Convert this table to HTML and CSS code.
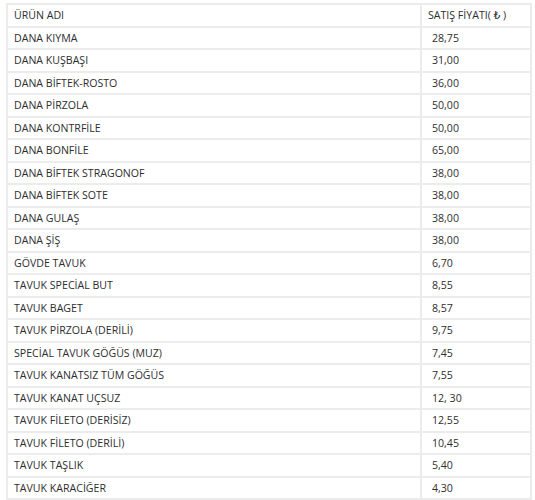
FILE: index.html
```html
<!DOCTYPE html>
<html lang="tr">
<head>
<meta charset="utf-8">
<link rel="stylesheet" href="styles.css">
</head>
<body>
<table class="price-table">
<tr class="head"><td>ÜRÜN ADI</td><td>SATIŞ FİYATI( ₺ )</td></tr>
<tr><td>DANA KIYMA</td><td class="price">28,75</td></tr>
<tr><td>DANA KUŞBAŞI</td><td class="price">31,00</td></tr>
<tr><td>DANA BİFTEK-ROSTO</td><td class="price">36,00</td></tr>
<tr><td>DANA PİRZOLA</td><td class="price">50,00</td></tr>
<tr><td>DANA KONTRFİLE</td><td class="price">50,00</td></tr>
<tr><td>DANA BONFİLE</td><td class="price">65,00</td></tr>
<tr><td>DANA BİFTEK STRAGONOF</td><td class="price">38,00</td></tr>
<tr><td>DANA BİFTEK SOTE</td><td class="price">38,00</td></tr>
<tr><td>DANA GULAŞ</td><td class="price">38,00</td></tr>
<tr><td>DANA ŞİŞ</td><td class="price">38,00</td></tr>
<tr><td>GÖVDE TAVUK</td><td class="price">6,70</td></tr>
<tr><td>TAVUK SPECİAL BUT</td><td class="price">8,55</td></tr>
<tr><td>TAVUK BAGET</td><td class="price">8,57</td></tr>
<tr><td>TAVUK PİRZOLA (DERİLİ)</td><td class="price">9,75</td></tr>
<tr><td>SPECİAL TAVUK GÖĞÜS (MUZ)</td><td class="price">7,45</td></tr>
<tr><td>TAVUK KANATSIZ TÜM GÖĞÜS</td><td class="price">7,55</td></tr>
<tr><td>TAVUK KANAT UÇSUZ</td><td class="price">12, 30</td></tr>
<tr><td>TAVUK FİLETO (DERİSİZ)</td><td class="price">12,55</td></tr>
<tr><td>TAVUK FİLETO (DERİLİ)</td><td class="price">10,45</td></tr>
<tr><td>TAVUK TAŞLIK</td><td class="price">5,40</td></tr>
<tr><td>TAVUK KARACİĞER</td><td class="price">4,30</td></tr>
</table>
</body>
</html>
```
FILE: styles.css
```css
html, body {
  margin: 0;
  background: #ffffff;
}
body {
  padding: 3px 3px 0 6px;
  font-family: "Open Sans", "DejaVu Sans", sans-serif;
  font-size: 10.6px;
  color: #2e2e2e;
}
.price-table {
  width: 526px;
  border-collapse: collapse;
  table-layout: fixed;
}
.price-table td {
  height: 22.5px;
  box-sizing: border-box;
  padding: 0 6px;
  border: 2px solid #ececec;
  vertical-align: middle;
  white-space: nowrap;
}
.price-table td:first-child {
  width: 414px;
}
.price-table .price {
  padding-left: 10px;
}
```
